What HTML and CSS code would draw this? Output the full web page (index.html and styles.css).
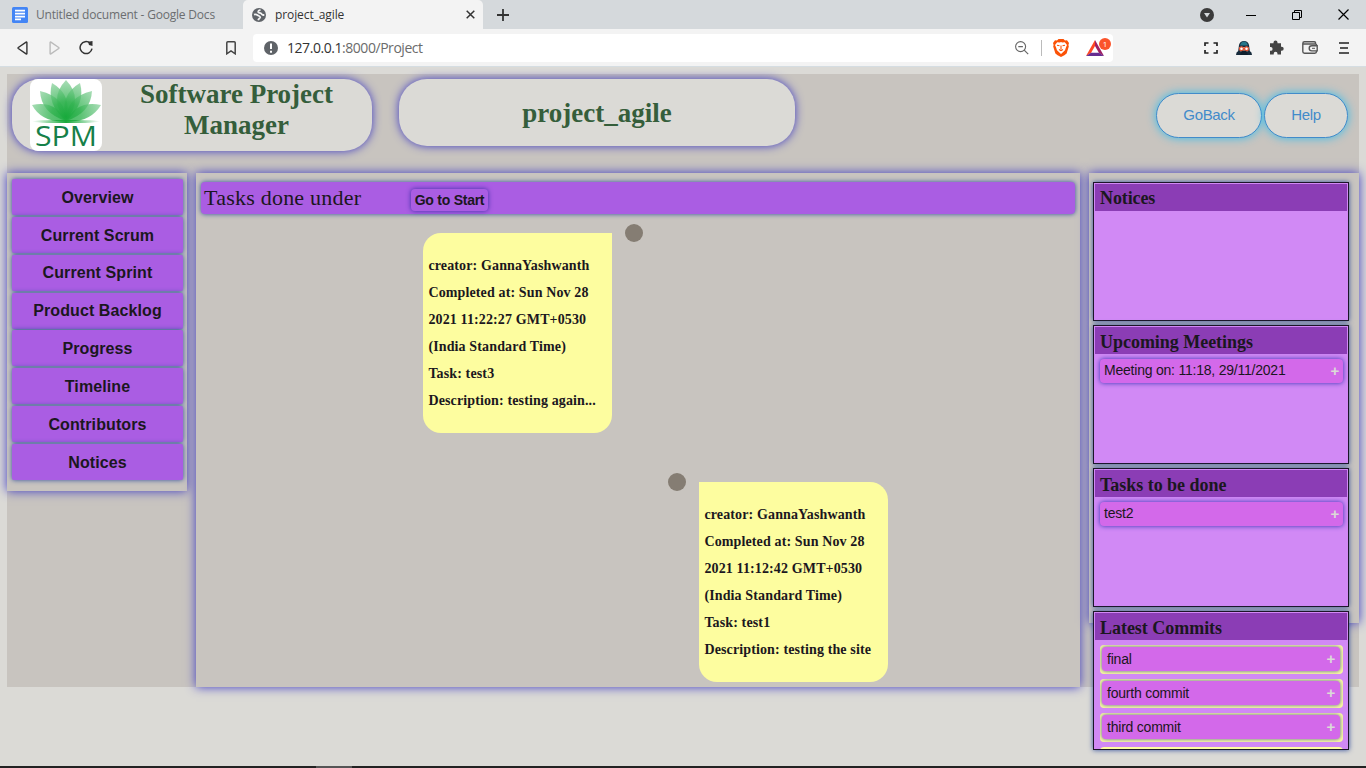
FILE: index.html
```html
<!DOCTYPE html>
<html lang="en">
<head>
<meta charset="utf-8">
<title>project_agile</title>
<link rel="stylesheet" href="styles.css">
</head>
<body>
<div class="tabs">
  <div class="tab tab-idle">
    <svg width="16" height="16" viewBox="0 0 16 16"><rect width="16" height="16" rx="1.5" fill="#4385f5"/><path d="M3 3.700h10M3 6.700h10M3 9.600h10M3 12.300h6" stroke="#fff" stroke-width="1.700"/></svg>
    <span class="t-docs">Untitled document - Google Docs</span>
  </div>
  <div class="tab tab-active">
    <svg width="14" height="14" viewBox="0 0 14 14"><circle cx="7" cy="7" r="7" fill="#5f6368"/><path d="M8.500 1.800C7 2.200 6 3 6.200 4c.3 1 1.600.7 2.600 1.300 1.200.7 1 1.700 2.300 1.700h1.200M2 6.600c1.300-.5 3 .1 4 .8 1 .8 2.300.8 2.200 2C8 10.400 6.600 10.500 6.200 12.200" fill="none" stroke="#f3f3f3" stroke-width="1.800"/></svg>
    <span class="t-active">project_agile</span>
    <svg class="close" width="9" height="9" viewBox="0 0 9 9"><path d="M.7.7l7.600 7.600M8.300.7L.7 8.300" stroke="#333" stroke-width="1.500"/></svg>
  </div>
  <svg class="plus" width="12" height="12" viewBox="0 0 12 12"><path d="M6 0v12M0 6h12" stroke="#333" stroke-width="1.800"/></svg>
  <div class="window-controls">
    <svg width="14" height="14" viewBox="0 0 14 14"><circle cx="7" cy="7" r="7" fill="#3b3b3b"/><path d="M4 5h6L7 9.500z" fill="#d5d9dc"/></svg>
    <svg width="10" height="10" viewBox="0 0 10 10"><path d="M0 5.500h10" stroke="#000"/></svg>
    <svg width="10" height="10" viewBox="0 0 10 10"><path d="M.5 2.500h7v7h-7zM2.500 2.500v-2h7v7h-2" fill="none" stroke="#000"/></svg>
    <svg width="11" height="11" viewBox="0 0 11 11"><path d="M.5.5l10 10M10.500.5l-10 10" stroke="#000" stroke-width="1.200"/></svg>
  </div>
</div>
<div class="toolbar">
  <div class="nav-icons">
    <svg width="11" height="14" viewBox="0 0 11 14"><path d="M9.900 1.600v10.800q0 .9-.8.4L1.300 7.500q-.6-.5 0-1L9.100 1.200q.8-.5.8.4z" fill="none" stroke="#333" stroke-width="1.400"/></svg>
    <svg class="fwd" width="11" height="14" viewBox="0 0 11 14"><path d="M1.100 1.600v10.800q0 .9.8.4l7.800-5.300q.6-.5 0-1L1.900 1.200q-.8-.5-.8.4z" fill="none" stroke="#bbb" stroke-width="1.400"/></svg>
    <svg class="reload" width="15" height="15" viewBox="0 0 15 15"><path d="M11 3A6 6 0 1 0 13 8.700" fill="none" stroke="#333" stroke-width="1.500"/><path d="M9 1.800l4.500-.8v5L10 5z" fill="#333"/></svg>
  </div>
  <svg class="bookmark" width="10" height="14" viewBox="0 0 10 14"><path d="M1.800.8h6.400q1 0 1 1v11L5 10 .8 12.800v-11q0-1 1-1z" fill="none" stroke="#444" stroke-width="1.500"/></svg>
  <div class="address">
    <svg width="14" height="14" viewBox="0 0 14 14"><circle cx="7" cy="7" r="7" fill="#5f6368"/><path d="M7 2.500v5.500M7 9.700v2" stroke="#fff" stroke-width="2"/></svg>
    <span class="url"><b>127.0.0.1</b>:8000/Project</span>
    <div class="address-icons">
      <svg width="14" height="14" viewBox="0 0 14 14"><circle cx="5.600" cy="5.600" r="5" fill="none" stroke="#666" stroke-width="1.100"/><path d="M9.200 9.200l4 4M3.300 5.600h4.600" stroke="#666" stroke-width="1.200"/></svg>
      <i class="sep"></i>
      <svg width="16" height="18" viewBox="0 0 16 18"><path d="M4 1.500L5.500 0h5L12 1.500l2-.2L16 4l-.6 2 .4 1.500-2.200 7Q12 16 8 18q-4-2-5.600-3.500L.2 7.500.6 6 0 4l2-2.700z" fill="#fb5207"/><path d="M4.200 3.200l2.600.4L8 3l1.200.6 2.600-.4L14 6l-1 2.200-1 3L8 15l-4-3.800-1-3L2 6z" fill="#fff"/><path d="M4 6.200l2.500.5M12 6.200l-2.500.5M8 6.500v4M6 10.500l2 1.200 2-1.200" stroke="#fb5207" stroke-width="1.100" fill="none"/></svg>
      <div class="bat">
        <svg width="18" height="16" viewBox="0 0 18 16"><path d="M9 0L0 16l5-3 4-7z" fill="#ff4724"/><path d="M9 0l9 16-5-3-4-7z" fill="#9e1f63"/><path d="M0 16h18l-5-3.300H5z" fill="#662d91"/></svg>
        <span class="bat-count">1</span>
      </div>
    </div>
  </div>
  <div class="extensions">
    <svg width="14" height="12" viewBox="0 0 14 12"><path d="M1 4V1h3.500M9.500 1H13v3M13 8v3H9.500M4.500 11H1V8" fill="none" stroke="#222" stroke-width="1.700"/></svg>
    <svg width="16" height="14" viewBox="0 0 16 14"><path d="M0 14q0-3 2.200-4L3 4q1-4 5-4t5 4l.8 6q2.200 1 2.200 4z" fill="#172b3c"/><path d="M4 4.500q1-4 4-4t4 4z" fill="#27768a"/><path d="M3.500 6h9L12 10l-4 2-4-2z" fill="#f4c9b4"/><circle cx="5.500" cy="7.700" r="1.900" fill="#fff" stroke="#e2502f" stroke-width="1.200"/><circle cx="10.500" cy="7.700" r="1.900" fill="#fff" stroke="#e2502f" stroke-width="1.200"/><path d="M4 14l1.500-4L8 9.500l2.500.5L12 14z" fill="#10202e"/></svg>
    <svg width="15" height="15" viewBox="0 0 15 15"><path d="M1 3.200h3.500V2.500a2 2 0 0 1 4 0v.7H12v3.600h.7a2 2 0 0 1 0 4H12V14.500H8.500v-.8a1.900 1.900 0 0 0-3.800 0v.8H1v-3.700h.7a1.900 1.900 0 0 0 0-3.800H1z" fill="#444"/></svg>
    <svg width="16" height="13" viewBox="0 0 16 13"><path d="M14.500 4.500V4q0-1-1-1H1.500M13.500 3V2q0-1.200-1.200-1.200H2.500Q.8.800.8 2.500v8q0 1.700 1.700 1.700h10.300q1.700 0 1.700-1.700V10M15.200 4.700h-5.400a2.600 2.600 0 0 0 0 5.200h5.400z" fill="none" stroke="#555" stroke-width="1.400"/><path d="M10 7.300h3" stroke="#555"/></svg>
    <svg width="10" height="12" viewBox="0 0 10 12"><path d="M0 1h10M1 6h8M0 11h10" stroke="#555" stroke-width="1.800"/></svg>
  </div>
</div>
<main class="page">
  <div class="wrapper">
    <header class="header">
      <div class="pill brand">
        <svg class="logo" width="72" height="72" viewBox="0 0 72 72">
          <defs>
            <radialGradient id="leaf" gradientUnits="userSpaceOnUse" cx="36" cy="38" r="38"><stop offset="0" stop-color="#17a93b"/><stop offset=".4" stop-color="#35b453"/><stop offset="1" stop-color="#9ad7aa"/></radialGradient>
            <linearGradient id="water"><stop offset="0" stop-color="#17a93b" stop-opacity="0"/><stop offset=".5" stop-color="#17a93b"/><stop offset="1" stop-color="#17a93b" stop-opacity="0"/></linearGradient>
          </defs>
          <rect width="72" height="72" rx="8" fill="#fff"/>
          <g fill="url(#leaf)" fill-opacity=".8">
            <path d="M36 42Q12 44 2 26q24-5 34 16z"/><path d="M36 42Q60 44 71 26q-24-5-35 16z"/>
            <path d="M36 42Q11 34 10 12q26 6 26 30z"/><path d="M36 42Q61 34 62 12q-26 6-26 30z"/>
            <path d="M36 42Q16 25 22 4q21 12 14 38z"/><path d="M36 42Q56 25 50 4 29 16 36 42z"/>
            <path d="M36 42Q18 20 36 1q18 19 0 41z"/>
          </g>
          <ellipse cx="36" cy="42.500" rx="34" ry="1.600" fill="url(#water)"/>
          <text class="logo-text" x="5" y="67" textLength="62" lengthAdjust="spacingAndGlyphs">SPM</text>
        </svg>
        <h1 class="brand-name">Software Project<br>Manager</h1>
      </div>
      <div class="pill project"><h1 class="project-name">project_agile</h1></div>
      <div class="actions">
        <button class="round goback">GoBack</button>
        <button class="round help">Help</button>
      </div>
    </header>
    <div class="columns">
      <nav class="panel sidebar">
        <button>Overview</button><button>Current Scrum</button><button>Current Sprint</button><button>Product Backlog</button><button>Progress</button><button>Timeline</button><button>Contributors</button><button>Notices</button>
      </nav>
      <section class="panel board">
        <div class="board-title"><span class="board-label">Tasks done under</span><button class="start">Go to Start</button></div>
        <div class="timeline">
          <div class="entry left">
            <div class="note">creator: GannaYashwanth<br>Completed at: Sun Nov 28<br>2021 11:22:27 GMT+0530<br>(India Standard Time)<br>Task: test3<br>Description: testing again...</div>
            <i class="dot"></i>
          </div>
          <div class="entry right">
            <i class="dot"></i>
            <div class="note">creator: GannaYashwanth<br>Completed at: Sun Nov 28<br>2021 11:12:42 GMT+0530<br>(India Standard Time)<br>Task: test1<br>Description: testing the site</div>
          </div>
        </div>
      </section>
      <aside class="panel feed">
        <div class="card"><h3 class="h-notices">Notices</h3></div>
        <div class="card"><h3 class="h-meetings">Upcoming Meetings</h3><div class="item">Meeting on: 11:18, 29/11/2021<b>+</b></div></div>
        <div class="card"><h3 class="h-tasks">Tasks to be done</h3><div class="item">test2<b>+</b></div></div>
        <div class="card"><h3 class="h-commits">Latest Commits</h3>
          <div class="commit"><div class="item">final<b>+</b></div></div>
          <div class="commit"><div class="item">fourth commit<b>+</b></div></div>
          <div class="commit"><div class="item">third commit<b>+</b></div></div>
          <div class="commit"></div>
        </div>
      </aside>
    </div>
  </div>
</main>
<footer class="taskbar"><i></i></footer>
</body>
</html>
```
FILE: styles.css
```css
* { box-sizing: border-box; }
html, body { height: 768px; overflow: hidden; }
body { margin: 0; display: flex; flex-direction: column; color: #1b1720; font-family: "Liberation Sans", Arial, sans-serif; }
svg { display: block; flex: none; }
button { border: 0; padding: 0; color: inherit; font-family: inherit; white-space: nowrap; }

.tabs { height: 29px; flex: none; display: flex; align-items: center; background: #d5d9dc; font: 12px/29px "Open Sans", "Noto Sans", sans-serif; white-space: nowrap; }
.tab { height: 29px; display: flex; align-items: center; }
.tab-idle { width: 243px; padding-left: 12px; gap: 8px; color: #6b6e70; }
.tab-active { width: 240px; padding-left: 9px; gap: 9px; background: #f3f3f3; border-radius: 5px 5px 0 0; color: #333; }
.t-docs { letter-spacing: -0.2px; }
.t-active { letter-spacing: -0.1px; }
.close { margin-left: auto; margin-right: 8px; }
.plus { margin-left: 14px; }
.window-controls { margin-left: auto; margin-right: 17px; display: flex; align-items: center; }
.window-controls svg + svg { margin-left: 36px; }
.window-controls svg:nth-child(2) { margin-left: 32px; }

.toolbar { height: 37px; flex: none; display: flex; align-items: center; background: #f3f3f3; }
.nav-icons { width: 226px; padding-left: 17px; display: flex; align-items: center; gap: 20px; }
.fwd { margin-left: 1px; }
.reload { margin-left: -1px; }
.address { width: 860px; height: 28px; margin-left: 17px; padding: 0 2px 0 11px; display: flex; align-items: center; background: #fff; border-radius: 4px; }
.url { margin-left: 9px; font: 14px/28px "Open Sans", "Noto Sans", sans-serif; color: #6b6b6b; letter-spacing: -0.45px; }
.url b { font-weight: 400; color: #333; }
.address-icons { margin-left: auto; display: flex; align-items: center; }
.sep { width: 1px; height: 16px; margin: 0 11px 0 12px; background: #bbb; }
.bat { position: relative; width: 25px; margin-left: 17px; }
.bat-count { position: absolute; left: 13px; top: -2px; width: 12px; height: 12px; border-radius: 6px; background: #fb542b; color: #fff; font: 8px/12px "Open Sans", sans-serif; text-align: center; }
.extensions { margin-left: auto; margin-right: 17px; display: flex; align-items: center; gap: 17px; }
.extensions svg:nth-child(1) { margin-right: 1px; }
.extensions svg:nth-child(4) { margin-left: 1px; }
.extensions svg:last-child { margin-left: 4px; }

.page { height: 700px; flex: none; padding: 8px 7px; background: #dbdad6; box-shadow: inset 0 1px #d5dde2; }
.wrapper { height: 613px; background: #c8c4bf; }
.header { height: 99px; padding: 5px; display: flex; align-items: flex-start; font-family: "Liberation Serif", "Times New Roman", serif; }
.pill { background: #dbdad6; border-radius: 28px; box-shadow: 0 0 10px #3f3bc2; color: #355e3b; text-align: center; }
.pill h1 { margin: 0; font-size: 27px; line-height: 31px; white-space: nowrap; }
.brand { width: 360px; height: 72px; padding-left: 18px; display: flex; }
.brand-name { width: 269px; }
.logo-text { font: 28px "Open Sans", sans-serif; fill: #168049; }
.project { width: 396px; height: 67px; margin-left: 27px; }
.pill .project-name { line-height: 68px; }
.actions { display: flex; gap: 2px; margin: 14px 6px 0 auto; }
.round { height: 45px; border: 1px solid #428bca; border-radius: 23px; background: #dbdad6; box-shadow: 0 0 10px #38bdec; color: #428bca; font: 15px "Liberation Sans", Arial, sans-serif; letter-spacing: -.35px; padding-bottom: 2px; }
.goback { width: 106px; }
.help { width: 84px; }

.columns { display: flex; align-items: flex-start; gap: 9px; }
.panel { background: #c8c4bf; box-shadow: 0 0 10px #3f3bc2; }
.sidebar { width: 180px; height: 318px; padding: 6px 4px 0 5px; display: flex; flex-direction: column; gap: 1.85px; }
.sidebar button { height: 36px; padding-top: 1.5px; background: #aa5de3; border-radius: 2px; box-shadow: 0 0 5px #2f4c9c; font-size: 16px; font-weight: 700; letter-spacing: .1px; }
.board { width: 884px; height: 514px; padding: 9px 5px 0; }
.board-title { height: 32px; padding-left: 3px; display: flex; align-items: center; background: #aa5de3; border-radius: 4px; box-shadow: 0 0 5px #2f4c9c; }
.board-label { width: 207px; font: 22px/32px "Liberation Serif", serif; letter-spacing: .23px; white-space: nowrap; }
.start { width: 77px; height: 22px; margin-top: 4px; background: #aa5de3; border-radius: 4px; box-shadow: 0 0 5px #3a2fa5; font-size: 14px; font-weight: 700; letter-spacing: -.25px; }
.timeline { padding-top: 19px; }
.entry { display: flex; align-items: flex-start; height: 249px; }
.left { padding-left: 222.4px; gap: 13px; }
.right { padding-left: 467.4px; gap: 13px; }
.note { width: 189px; height: 200px; padding: 19px 5px; border-radius: 18px; background: #fdfd9f; font: 700 14px/27px "Liberation Serif", serif; letter-spacing: .13px; white-space: nowrap; }
.left .note { border-top-right-radius: 0; }
.right .note { border-top-left-radius: 0; }
.dot { width: 18px; height: 18px; margin-top: -9px; border-radius: 50%; background: #857d73; }

.feed { width: 270px; height: 450px; padding: 9px 10px 0 4px; display: flex; flex-direction: column; gap: 4px; }
.card { height: 139px; flex: none; padding: 1px; overflow: hidden; border: 1px solid #1c1528; background: #d189f5; box-shadow: 0 0 5px #2f4c9c; }
.card h3 { height: 27px; margin: 0; padding-left: 5px; background: #8b3db5; font: 700 18px/30px "Liberation Serif", serif; letter-spacing: -.03px; white-space: nowrap; }
.card .h-notices { line-height: 29px; letter-spacing: -.1px; }
.card .h-meetings { line-height: 31px; }
.item { height: 24px; margin: 5px 4px 0 5px; padding: 0 4px; display: flex; justify-content: space-between; border-radius: 4px; background: #d369ea; box-shadow: 0 0 5px #3430b5; font-size: 14px; line-height: 23px; letter-spacing: -.22px; }
.item b { color: #dbdad6; font-size: 15px; }
.commit { height: 29px; margin: 5px 4px 0 5px; padding: 2px 3px 3px 2px; overflow: hidden; border-radius: 4px; background: #fdfd9f; }
.commit .item { margin: 0; padding: 0 5px; height: 24px; line-height: 24px; box-shadow: 0 0 4px #4d55a5; }

.taskbar { height: 2px; flex: none; background: #222; }
.taskbar i { display: block; width: 36px; height: 2px; margin-left: 316px; background: #555; }
```
